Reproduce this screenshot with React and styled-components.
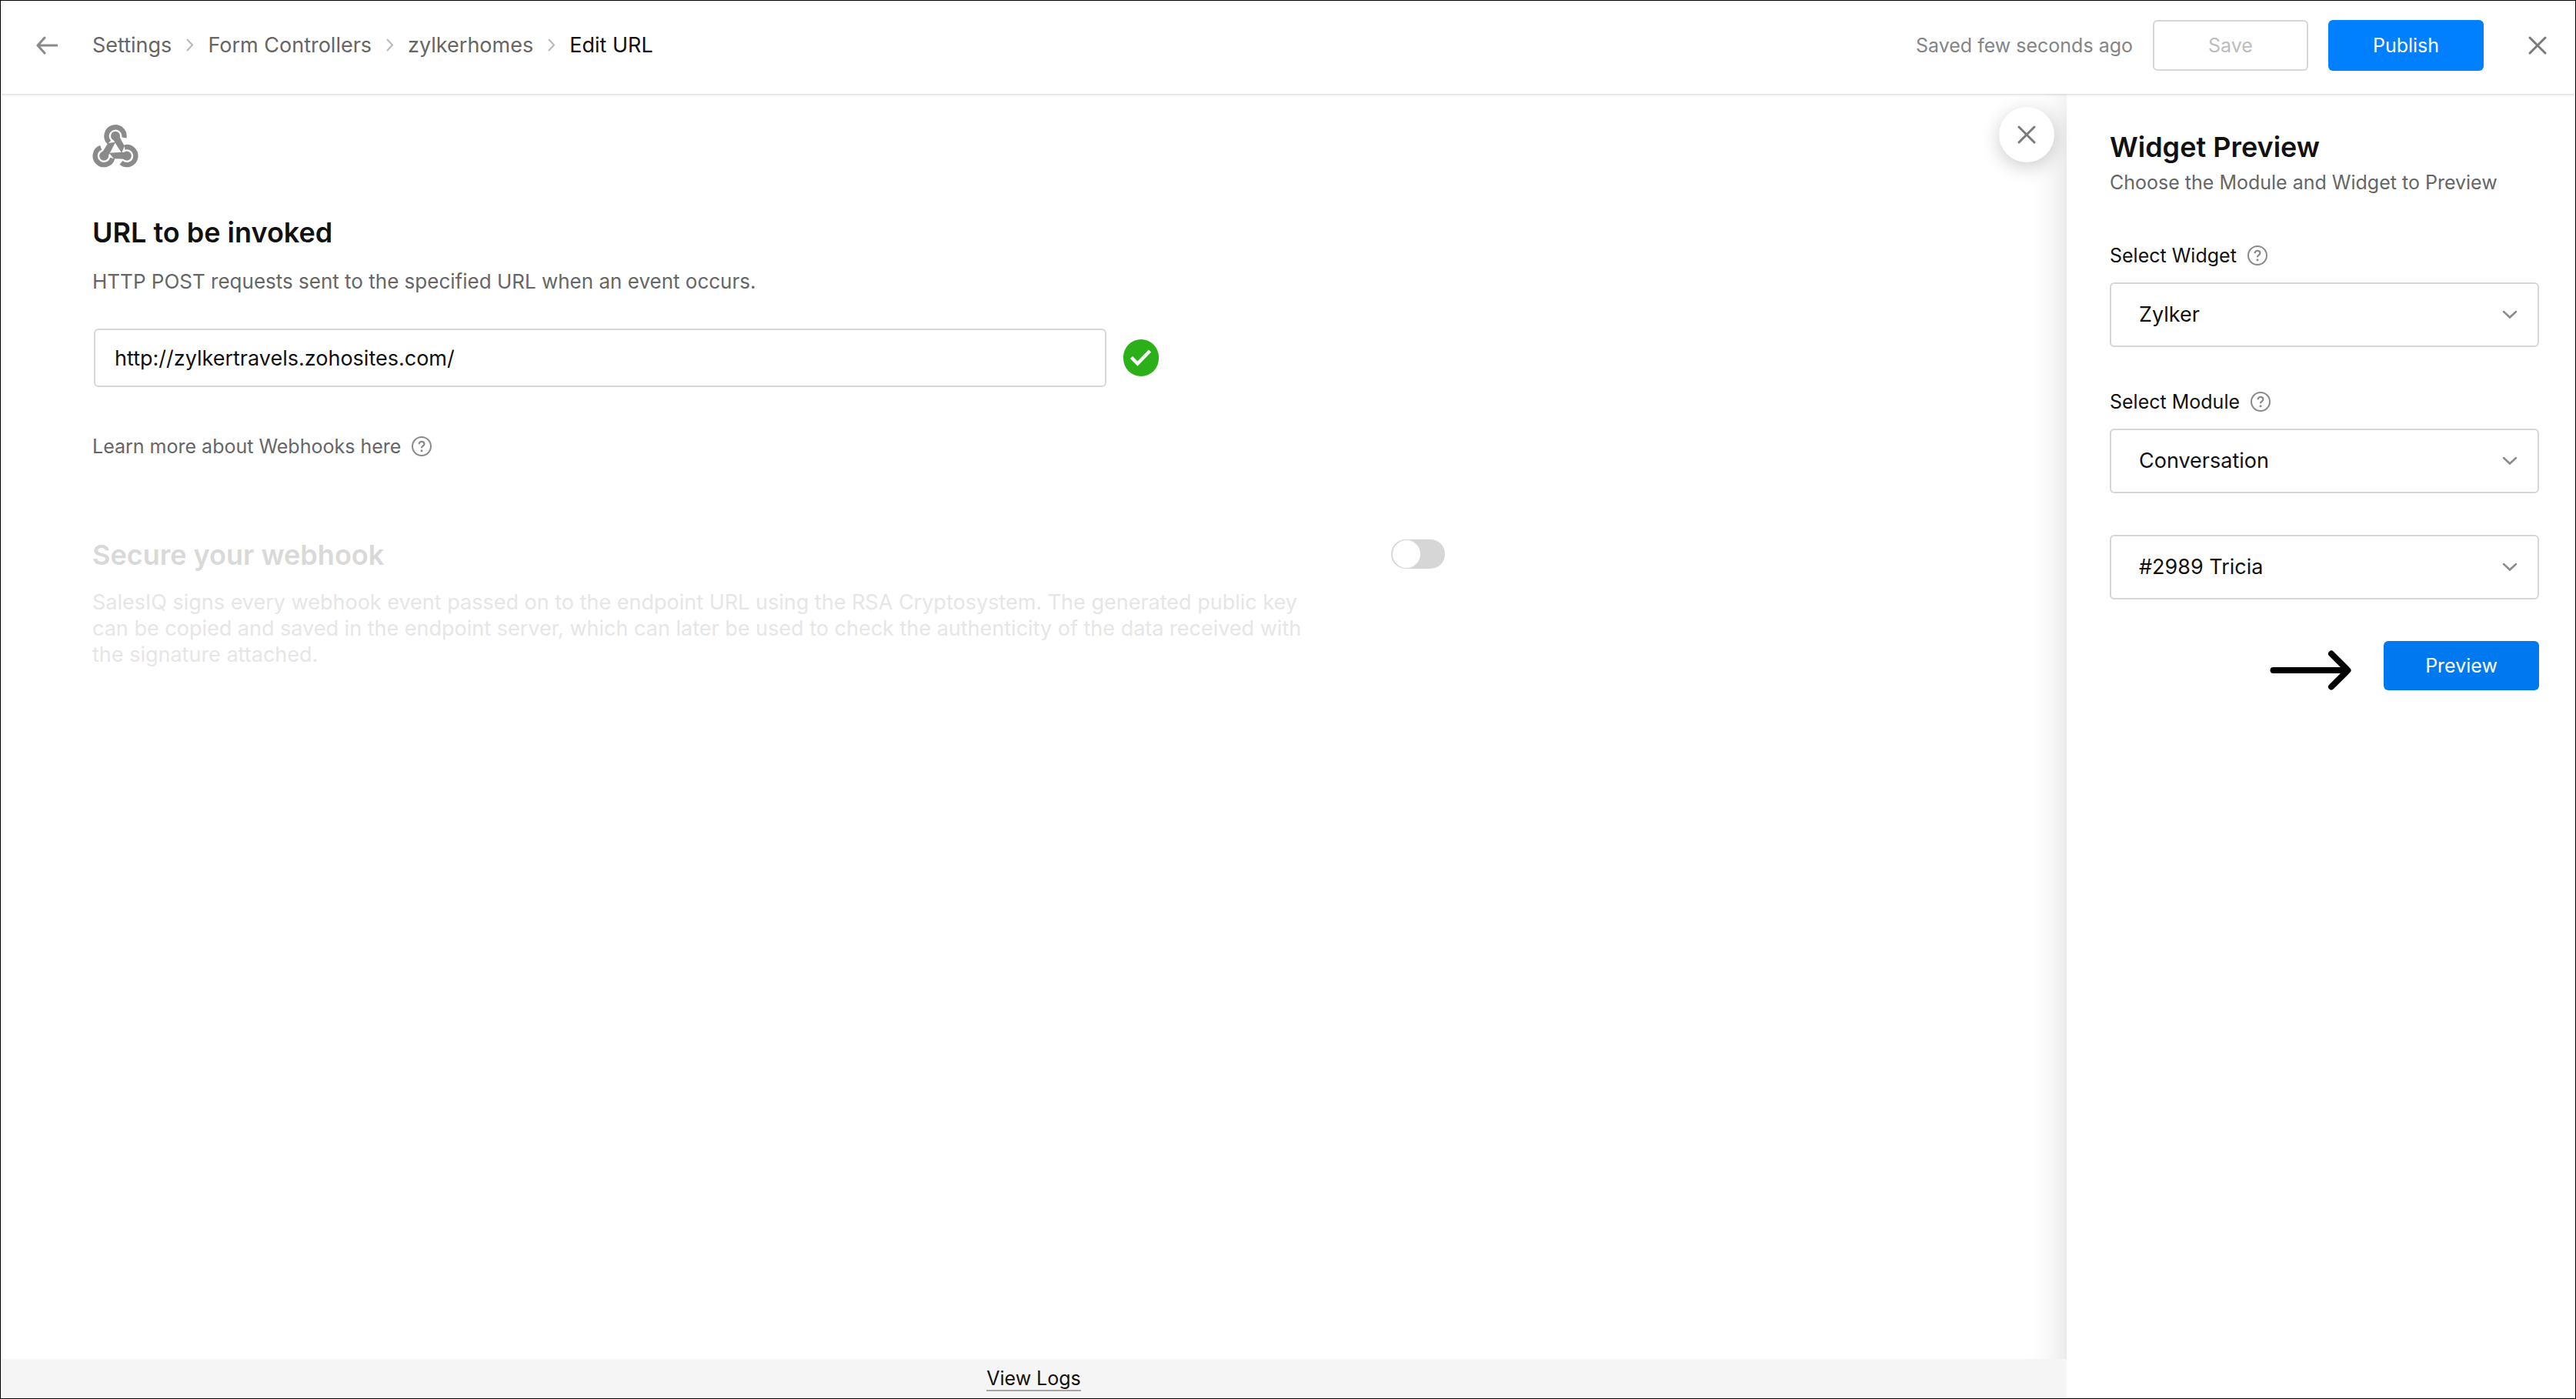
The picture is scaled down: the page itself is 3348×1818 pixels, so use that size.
import React, { useState } from "react";
import styled, { createGlobalStyle } from "styled-components";

const CloseIcon = () => (
  <svg width="24" height="24" viewBox="0 0 24 24" fill="none" aria-hidden="true">
    <path
      d="M2 2L22 22M22 2L2 22"
      stroke="#7a7a7a"
      strokeWidth="3"
      strokeLinecap="round"
    />
  </svg>
);

const BackIcon = () => (
  <svg width="28" height="24" viewBox="0 0 28 24" fill="none" aria-hidden="true">
    <path
      d="M11 2L2 12L11 22M2 12H27"
      stroke="#8a8a8a"
      strokeWidth="3"
      strokeLinecap="round"
      strokeLinejoin="round"
    />
  </svg>
);

const Separator = () => (
  <svg width="9" height="17" viewBox="0 0 9 17" fill="none" aria-hidden="true">
    <path d="M1 1L8 8.5L1 16" stroke="#b8b8b8" strokeWidth="2" />
  </svg>
);

const HelpIcon = () => (
  <svg width="26" height="26" viewBox="0 0 26 26" fill="none" aria-hidden="true">
    <circle cx="13" cy="13" r="12" stroke="#8a8a8a" strokeWidth="2" />
    <path
      d="M9.6 10.2C9.6 8 11 6.8 13 6.8C15 6.8 16.4 8 16.4 9.9C16.4 12.3 13 12.4 13 15.3"
      stroke="#8a8a8a"
      strokeWidth="2.2"
    />
    <circle cx="13" cy="18.8" r="1.5" fill="#8a8a8a" />
  </svg>
);

const ValidIcon = () => (
  <svg width="46" height="48" viewBox="0 0 46 48" fill="none" role="img" aria-label="Valid URL">
    <rect width="46" height="48" rx="23" fill="#2bb01a" />
    <path d="M10.5 23.5L18.5 31.5L34.5 15" stroke="#fff" strokeWidth="4.5" />
  </svg>
);

const Chevron = () => (
  <svg width="20" height="12" viewBox="0 0 20 12" fill="none" aria-hidden="true">
    <path
      d="M2 2L10 9.5L18 2"
      stroke="#8a8a8a"
      strokeWidth="2.5"
      strokeLinecap="round"
    />
  </svg>
);

const PointerArrow = () => (
  <svg width="106" height="52" viewBox="0 0 106 52" fill="none" aria-hidden="true">
    <path
      d="M4.5 26H101M80 4.5L101.5 26L80 47.5"
      stroke="#000"
      strokeWidth="8"
      strokeLinecap="round"
      strokeLinejoin="round"
    />
  </svg>
);

// One hook (ring, arm and hub), turned three times around the centre
const WebhookIcon = () => (
  <svg width="60" height="56" viewBox="-90 -96 180 168" fill="none" aria-hidden="true">
    {[0, 120, 240].map((angle) => (
      <g key={angle} transform={`rotate(${angle})`}>
        <path d="M34 -45.5A34.5 34.5 0 1 0 -24.4 -27.1" stroke="#8a8a8a" strokeWidth="19" />
        <path d="M0 -28L-23 17L-32 30L-55 14L-46 4L-29 -24Z" fill="#8a8a8a" />
        <circle cx="0" cy="-51.5" r="18" fill="#8a8a8a" />
      </g>
    ))}
  </svg>
);

const SelectField = ({ id, label, value, options, onChange }) => (
  <Field>
    {label && (
      <FieldLabel>
        <label htmlFor={id}>{label}</label>
        <HelpIcon />
      </FieldLabel>
    )}
    <SelectBox>
      <Select
        id={id}
        aria-label={label ? undefined : "Select Conversation"}
        value={value}
        onChange={(e) => onChange(e.target.value)}
      >
        {options.map((option) => (
          <option key={option}>{option}</option>
        ))}
      </Select>
      <Chevron />
    </SelectBox>
  </Field>
);

const App = () => {
  const [url, setUrl] = useState("http://zylkertravels.zohosites.com/");
  const [secure, setSecure] = useState(false);
  const [widget, setWidget] = useState("Zylker");
  const [module, setModule] = useState("Conversation");
  const [conversation, setConversation] = useState("#2989 Tricia");

  return (
    <>
      <GlobalStyle />
      <Page>
        <Header>
          <IconButton aria-label="Back">
            <BackIcon />
          </IconButton>
          <Breadcrumb aria-label="Breadcrumb">
            <Crumb href="#settings">Settings</Crumb>
            <Separator />
            <Crumb href="#controllers">Form Controllers</Crumb>
            <Separator />
            <Crumb href="#zylkerhomes">zylkerhomes</Crumb>
            <Separator />
            <CurrentCrumb aria-current="page">Edit URL</CurrentCrumb>
          </Breadcrumb>
          <Actions>
            <SavedStatus>Saved few seconds ago</SavedStatus>
            <SaveButton disabled>Save</SaveButton>
            <PublishButton>Publish</PublishButton>
          </Actions>
          <IconButton aria-label="Close">
            <CloseIcon />
          </IconButton>
        </Header>

        <Body>
          <Main>
            <Content>
              <WebhookIcon />
              <UrlSection>
                <Title as="label" htmlFor="url">
                  URL to be invoked
                </Title>
                <Description>
                  HTTP POST requests sent to the specified URL when an event occurs.
                </Description>
                <UrlRow>
                  <UrlInput
                    id="url"
                    type="text"
                    value={url}
                    onChange={(e) => setUrl(e.target.value)}
                  />
                  <ValidIcon />
                </UrlRow>
                <LearnMore href="#webhooks">
                  Learn more about Webhooks here
                  <HelpIcon />
                </LearnMore>
              </UrlSection>

              <SecureSection>
                <SecureText>
                  <SecureTitle as="label" htmlFor="secure">
                    Secure your webhook
                  </SecureTitle>
                  <SecureDescription>
                    SalesIQ signs every webhook event passed on to the endpoint URL using
                    the RSA Cryptosystem. The generated public key can be copied and saved
                    in the endpoint server, which can later be used to check the
                    authenticity of the data received with the signature attached.
                  </SecureDescription>
                </SecureText>
                <Toggle
                  id="secure"
                  type="checkbox"
                  role="switch"
                  checked={secure}
                  onChange={(e) => setSecure(e.target.checked)}
                />
              </SecureSection>
            </Content>
            <Footer>
              <LogsLink href="#logs">View Logs</LogsLink>
            </Footer>
          </Main>

          <Panel>
            <PanelClose aria-label="Close preview">
              <CloseIcon />
            </PanelClose>
            <Title>Widget Preview</Title>
            <PanelHint>Choose the Module and Widget to Preview</PanelHint>
            <Fields>
              <SelectField
                id="widget"
                label="Select Widget"
                value={widget}
                options={["Zylker"]}
                onChange={setWidget}
              />
              <SelectField
                id="module"
                label="Select Module"
                value={module}
                options={["Conversation"]}
                onChange={setModule}
              />
              <SelectField
                id="conversation"
                value={conversation}
                options={["#2989 Tricia"]}
                onChange={setConversation}
              />
            </Fields>
            <PreviewRow>
              <PointerArrow />
              <PreviewButton>Preview</PreviewButton>
            </PreviewRow>
          </Panel>
        </Body>
      </Page>
    </>
  );
};

export default App;

const GlobalStyle = createGlobalStyle`
  * {
    box-sizing: border-box;
  }
  body {
    margin: 0;
    background: #ffffff;
    color: #111111;
    font-family: Inter, "Liberation Sans", sans-serif;
    font-size: 25px;
    line-height: 34px;
  }
  button, input, select {
    font: inherit;
  }
`;

const Page = styled.div`
  display: flex;
  flex-direction: column;
  min-height: 100vh;
  border: 1px solid #000000;
`;

const Header = styled.header`
  position: relative;
  z-index: 2;
  display: flex;
  align-items: center;
  height: 121px;
  padding: 0 37px 6px 46px;
  background: #ffffff;
  box-shadow: 0 1px 3px rgba(0, 0, 0, 0.18);
`;

const IconButton = styled.button`
  display: flex;
  padding: 0;
  border: none;
  background: none;
  cursor: pointer;
`;

const Breadcrumb = styled.nav`
  display: flex;
  align-items: center;
  gap: 19px;
  margin-left: 45px;
  font-size: 27px;
`;

const Crumb = styled.a`
  color: #666666;
  text-decoration: none;
`;

const CurrentCrumb = styled.span`
  color: #111111;
`;

const Actions = styled.div`
  display: flex;
  align-items: center;
  margin-left: auto;
  margin-right: 58px;
  gap: 26px;
`;

const SavedStatus = styled.span`
  color: #858585;
`;

const Button = styled.button`
  width: 202px;
  height: 66px;
  border: none;
  border-radius: 6px;
  color: #ffffff;
  cursor: pointer;
`;

const SaveButton = styled(Button)`
  border: 2px solid #d6d6d6;
  background: #ffffff;
  color: #bdbdbd;
`;

const PublishButton = styled(Button)`
  background: #0080ff;
`;

const PreviewButton = styled(Button)`
  height: 64px;
  background: #0078f0;
`;

const Body = styled.div`
  display: flex;
  flex: 1;
`;

const Main = styled.main`
  display: flex;
  flex: 1;
  flex-direction: column;
  min-width: 0;
`;

const Content = styled.div`
  flex: 1;
  padding: 40px 119px;
`;

const UrlSection = styled.section`
  display: flex;
  flex-direction: column;
  align-items: flex-start;
  margin-top: 56px;
`;

const Title = styled.h2`
  margin: 0;
  font-size: 36px;
  font-weight: 600;
  line-height: 40px;
`;

const Description = styled.p`
  margin: 27px 0 44px;
  color: #666666;
  font-size: 26px;
`;

const UrlRow = styled.div`
  display: flex;
  align-items: center;
  gap: 22px;
  width: 100%;
  padding-left: 2px;
`;

const UrlInput = styled.input`
  width: 100%;
  max-width: 1316px;
  height: 76px;
  padding: 0 25px;
  border: 2px solid #d6d6d6;
  border-radius: 6px;
  outline: none;
  background: #ffffff;
  color: #111111;
  font-size: 27px;
`;

const LearnMore = styled.a`
  display: flex;
  align-items: center;
  gap: 14px;
  margin-top: 60px;
  color: #666666;
  text-decoration: none;
`;

const SecureSection = styled.section`
  display: flex;
  align-items: flex-start;
  justify-content: space-between;
  max-width: 1758px;
  margin-top: 104px;
`;

const SecureText = styled.div`
  max-width: 1600px;
`;

const SecureTitle = styled(Title)`
  display: block;
  color: #d9d9d9;
`;

const SecureDescription = styled.p`
  margin: 25px 0 0;
  color: #e6e6e6;
  font-size: 27px;
`;

const Toggle = styled.input`
  flex: none;
  display: flex;
  align-items: center;
  width: 70px;
  height: 38px;
  margin: 0;
  padding: 0 2px;
  appearance: none;
  border-radius: 19px;
  background: #d6d6d6;
  cursor: pointer;

  &::before {
    content: "";
    width: 36px;
    height: 36px;
    border-radius: 50%;
    background: #ffffff;
  }

  &:checked {
    justify-content: flex-end;
    background: #0080ff;
  }
`;

const Footer = styled.footer`
  position: relative;
  z-index: 1;
  display: flex;
  align-items: flex-end;
  justify-content: center;
  height: 51px;
  padding-bottom: 9px;
  background: #f5f5f5;
`;

const LogsLink = styled.a`
  border-bottom: 2px solid #a6a6a6;
  color: #111111;
  line-height: 30px;
  text-decoration: none;
`;

const Panel = styled.aside`
  position: relative;
  flex: none;
  width: 661px;
  padding: 49px 47px 49px 56px;
  background: #ffffff;
  box-shadow: 0 0 48px rgba(0, 0, 0, 0.16);
`;

const PanelClose = styled(IconButton)`
  position: absolute;
  top: 17px;
  left: -88px;
  align-items: center;
  justify-content: center;
  width: 72px;
  height: 72px;
  border-radius: 50%;
  background: #ffffff;
  box-shadow: 0 6px 24px rgba(0, 0, 0, 0.2);
`;

const PanelHint = styled.p`
  margin: 9px 0 61px;
  color: #666666;
`;

const Fields = styled.div`
  display: flex;
  flex-direction: column;
  gap: 54px;
`;

const Field = styled.div`
  display: flex;
  flex-direction: column;
  gap: 18px;
`;

const FieldLabel = styled.div`
  display: flex;
  align-items: center;
  gap: 14px;
`;

const SelectBox = styled.div`
  display: flex;
  align-items: center;

  svg {
    flex: none;
    margin-left: -48px;
    pointer-events: none;
  }
`;

const Select = styled.select`
  width: 100%;
  height: 84px;
  padding: 0 60px 0 36px;
  appearance: none;
  border: 2px solid #d6d6d6;
  border-radius: 6px;
  background: #ffffff;
  color: #111111;
  font-size: 27px;
`;

const PreviewRow = styled.div`
  display: flex;
  align-items: flex-end;
  justify-content: flex-end;
  gap: 42px;
  margin-top: 54px;
`;
